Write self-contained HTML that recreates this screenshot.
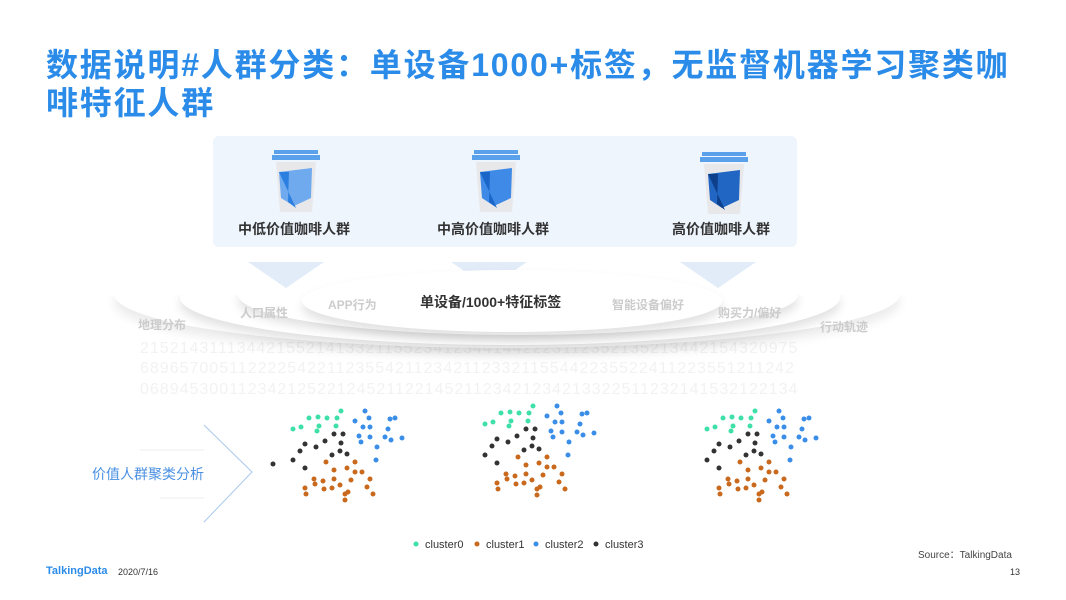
<!DOCTYPE html>
<html><head><meta charset="utf-8"><style>
body{margin:0;width:1066px;height:599px;background:#fff;position:relative;overflow:hidden;font-family:"Liberation Sans","Noto Sans CJK SC",sans-serif}
.t{position:absolute;left:46px;top:46px;width:1010px;font-size:32px;line-height:38px;font-weight:bold;color:#2b8be8;letter-spacing:1.8px}
.panel{position:absolute;left:213px;top:136px;width:584px;height:111px;background:#eef5fd;border-radius:6px}
.lab{position:absolute;font-size:14px;font-weight:bold;color:#333}
.g{position:absolute;font-size:12px;color:#ccc;font-weight:bold}
.ell{position:absolute;border-radius:50%;background:#fff;box-shadow:0 6px 10px rgba(0,0,0,0.12)}
.num{position:absolute;left:140px;font-size:16px;color:#f2f2f2;letter-spacing:1px;white-space:nowrap}
.tri{position:absolute;width:0;height:0;border-left:38px solid transparent;border-right:38px solid transparent;border-top:26px solid #e2ecf9}
</style></head><body>
<div class="t">数据说明#人群分类：单设备1000+标签，无监督机器学习聚类咖<br>啡特征人群</div>
<div class="num" style="top:340px">2152143111344215521413321155234123441442223112352135213442154320975</div>
<div class="num" style="top:360px">6896570051122225422112355421123421123321155442235522411223551211242</div>
<div class="num" style="top:381px">0689453001123421252212452112214521123421234213322511232141532122134</div>
<div class="panel"></div>
<svg style="position:absolute;left:0;top:0" width="1066" height="260">
<defs><g id="cup"><rect x="-22" y="0" width="44" height="4" fill="#5aa0ea"/><rect x="-24" y="5" width="48" height="5" fill="#5aa0ea"/><path d="M-20 12 L20 12 L16 62 L-16 62 Z" fill="#e8e8ea"/></g></defs>
<use href="#cup" x="296" y="150"/><path d="M279 172 L312 168 L311 198 L294 206 L281 198 Z" fill="#6fa9ee"/><path d="M279 172 L289 172 L288 202 L296 208 Z" fill="#2b7fe0"/>
<use href="#cup" x="496" y="150"/><path d="M480 172 L512 168 L511 198 L494 206 L482 198 Z" fill="#3e8ae6"/><path d="M480 172 L490 172 L489 202 L497 208 Z" fill="#1a66c8"/>
<use href="#cup" x="724" y="152"/><path d="M708 174 L740 170 L739 200 L722 208 L710 200 Z" fill="#2166c2"/><path d="M708 174 L718 174 L717 204 L725 210 Z" fill="#0d3f8a"/>
</svg>
<div class="lab" style="left:238px;top:219px">中低价值咖啡人群</div>
<div class="lab" style="left:437px;top:219px">中高价值咖啡人群</div>
<div class="lab" style="left:672px;top:219px">高价值咖啡人群</div>
<div class="tri" style="left:248px;top:262px"></div>
<div class="tri" style="left:451px;top:262px"></div>
<div class="tri" style="left:680px;top:262px"></div>
<div class="ell" style="left:114px;top:240px;width:786px;height:108px;box-shadow:0 8px 10px rgba(0,0,0,0.08);clip-path:inset(55px -20px -20px -20px)"></div>
<div class="ell" style="left:180px;top:250px;width:660px;height:95px;clip-path:inset(45px -20px -20px -20px)"></div>
<div class="ell" style="left:238px;top:255px;width:560px;height:80px;clip-path:inset(40px -20px -20px -20px)"></div>
<div class="ell" style="left:302px;top:270px;width:420px;height:62px"></div>
<div class="lab" style="left:420px;top:292px">单设备/1000+特征标签</div>
<div class="g" style="left:138px;top:316px">地理分布</div>
<div class="g" style="left:240px;top:304px">人口属性</div>
<div class="g" style="left:328px;top:296px">APP行为</div>
<div class="g" style="left:612px;top:296px">智能设备偏好</div>
<div class="g" style="left:718px;top:304px">购买力/偏好</div>
<div class="g" style="left:820px;top:318px">行动轨迹</div>
<svg style="position:absolute;left:0;top:400px" width="1066" height="200">
<path d="M204 25 L252 72 L204 122" stroke="#a9c8ee" fill="none"/>
<line x1="140" y1="50" x2="204" y2="50" stroke="#eee"/><line x1="160" y1="98" x2="204" y2="98" stroke="#eee"/>
<defs><g id="cl">
<g fill="#3ee0a8"><circle cx="293" cy="29" r="2.5"/><circle cx="301" cy="27" r="2.5"/><circle cx="309" cy="18" r="2.5"/><circle cx="318" cy="17" r="2.5"/><circle cx="319" cy="26" r="2.5"/><circle cx="327" cy="18" r="2.5"/><circle cx="336" cy="26" r="2.5"/><circle cx="317" cy="31" r="2.5"/><circle cx="341" cy="11" r="2.5"/><circle cx="337" cy="18" r="2.5"/></g>
<g fill="#3b8ee8"><circle cx="365" cy="11" r="2.5"/><circle cx="369" cy="18" r="2.5"/><circle cx="355" cy="21" r="2.5"/><circle cx="363" cy="27" r="2.5"/><circle cx="370" cy="27" r="2.5"/><circle cx="390" cy="19" r="2.5"/><circle cx="395" cy="18" r="2.5"/><circle cx="388" cy="29" r="2.5"/><circle cx="359" cy="36" r="2.5"/><circle cx="370" cy="37" r="2.5"/><circle cx="385" cy="37" r="2.5"/><circle cx="391" cy="40" r="2.5"/><circle cx="402" cy="38" r="2.5"/><circle cx="377" cy="47" r="2.5"/><circle cx="361" cy="42" r="2.5"/><circle cx="376" cy="60" r="2.5"/></g>
<g fill="#333"><circle cx="293" cy="60" r="2.5"/><circle cx="305" cy="68" r="2.5"/><circle cx="300" cy="51" r="2.5"/><circle cx="305" cy="44" r="2.5"/><circle cx="316" cy="47" r="2.5"/><circle cx="325" cy="41" r="2.5"/><circle cx="334" cy="34" r="2.5"/><circle cx="343" cy="34" r="2.5"/><circle cx="341" cy="43" r="2.5"/><circle cx="332" cy="55" r="2.5"/><circle cx="340" cy="51" r="2.5"/><circle cx="347" cy="54" r="2.5"/></g>
<g fill="#c8691e"><circle cx="326" cy="62" r="2.5"/><circle cx="355" cy="62" r="2.5"/><circle cx="334" cy="70" r="2.5"/><circle cx="347" cy="68" r="2.5"/><circle cx="355" cy="72" r="2.5"/><circle cx="362" cy="72" r="2.5"/><circle cx="314" cy="79" r="2.5"/><circle cx="305" cy="88" r="2.5"/><circle cx="315" cy="84" r="2.5"/><circle cx="323" cy="81" r="2.5"/><circle cx="334" cy="79" r="2.5"/><circle cx="351" cy="80" r="2.5"/><circle cx="370" cy="79" r="2.5"/><circle cx="324" cy="89" r="2.5"/><circle cx="332" cy="88" r="2.5"/><circle cx="340" cy="85" r="2.5"/><circle cx="348" cy="92" r="2.5"/><circle cx="367" cy="87" r="2.5"/><circle cx="306" cy="94" r="2.5"/><circle cx="345" cy="94" r="2.5"/><circle cx="373" cy="94" r="2.5"/><circle cx="345" cy="100" r="2.5"/></g>
</g></defs>
<circle cx="273" cy="64" r="2.5" fill="#333"/>
<use href="#cl"/><use href="#cl" x="192" y="-5"/><use href="#cl" x="414" y="0"/>
<g font-size="11" fill="#333"><circle cx="416" cy="144" r="2.5" fill="#3ee0a8"/><text x="425" y="148">cluster0</text><circle cx="477" cy="144" r="2.5" fill="#c8691e"/><text x="486" y="148">cluster1</text><circle cx="536" cy="144" r="2.5" fill="#3b8ee8"/><text x="545" y="148">cluster2</text><circle cx="596" cy="144" r="2.5" fill="#333"/><text x="605" y="148">cluster3</text></g>
</svg>
<div style="position:absolute;left:92px;top:464px;font-size:14px;color:#4a90e2">价值人群聚类分析</div>
<div style="position:absolute;left:918px;top:546px;font-size:10px;color:#444">Source：TalkingData</div>
<div style="position:absolute;left:46px;top:565px;font-size:11px;font-weight:bold;color:#2b8be8">TalkingData</div>
<div style="position:absolute;left:118px;top:567px;font-size:9px;color:#333">2020/7/16</div>
<div style="position:absolute;left:1010px;top:567px;font-size:9px;color:#333">13</div>
</body></html>
